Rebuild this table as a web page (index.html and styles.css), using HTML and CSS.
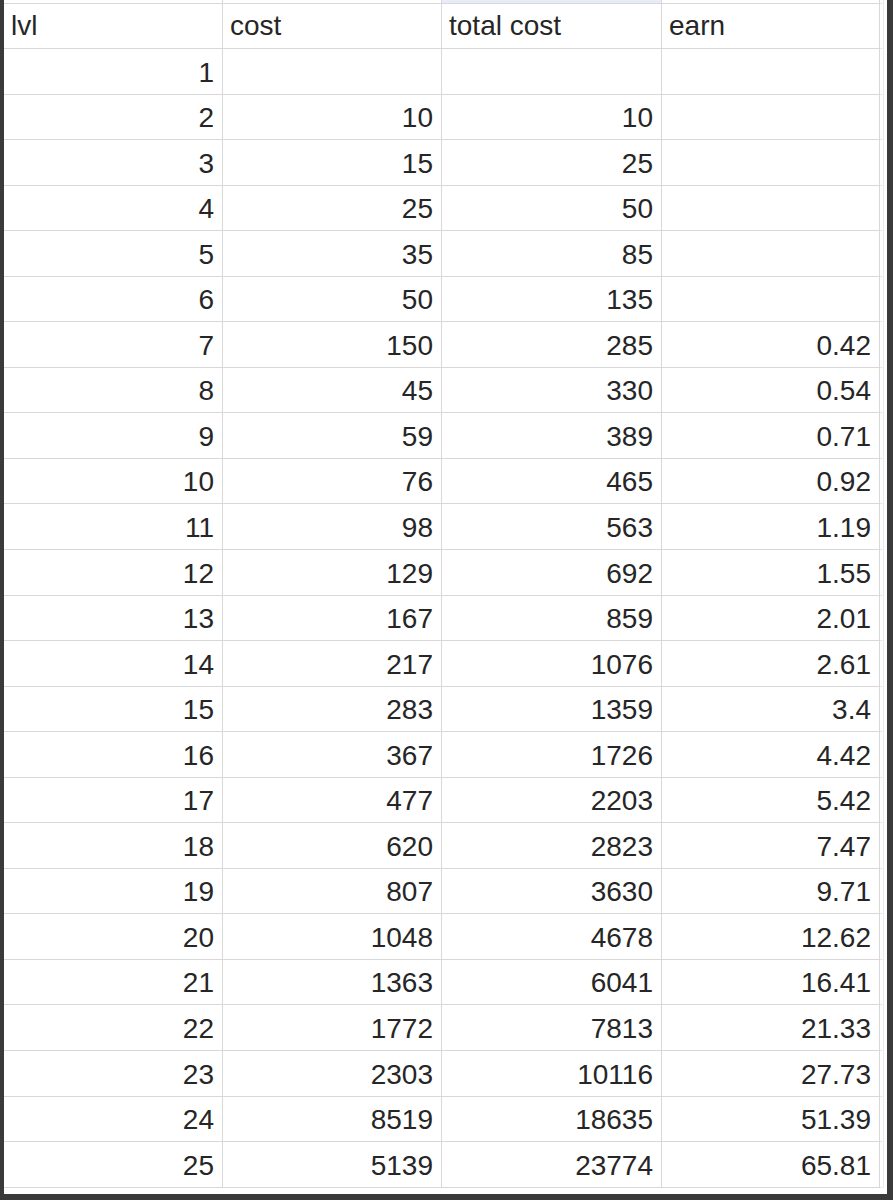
FILE: index.html
```html
<!DOCTYPE html>
<html>
<head>
<meta charset="utf-8">
<link rel="stylesheet" href="styles.css">
</head>
<body>
<div class="sheet">
  <div class="row top"><div class="c"></div><div class="c"></div><div class="c sel"></div><div class="c"></div><div class="c end"></div></div>
  <div class="row head"><div class="c">lvl</div><div class="c">cost</div><div class="c">total cost</div><div class="c">earn</div><div class="c end"></div></div>
  <div class="row"><div class="c n">1</div><div class="c n"></div><div class="c n"></div><div class="c n"></div><div class="c end"></div></div>
  <div class="row"><div class="c n">2</div><div class="c n">10</div><div class="c n">10</div><div class="c n"></div><div class="c end"></div></div>
  <div class="row"><div class="c n">3</div><div class="c n">15</div><div class="c n">25</div><div class="c n"></div><div class="c end"></div></div>
  <div class="row"><div class="c n">4</div><div class="c n">25</div><div class="c n">50</div><div class="c n"></div><div class="c end"></div></div>
  <div class="row"><div class="c n">5</div><div class="c n">35</div><div class="c n">85</div><div class="c n"></div><div class="c end"></div></div>
  <div class="row"><div class="c n">6</div><div class="c n">50</div><div class="c n">135</div><div class="c n"></div><div class="c end"></div></div>
  <div class="row"><div class="c n">7</div><div class="c n">150</div><div class="c n">285</div><div class="c n">0.42</div><div class="c end"></div></div>
  <div class="row"><div class="c n">8</div><div class="c n">45</div><div class="c n">330</div><div class="c n">0.54</div><div class="c end"></div></div>
  <div class="row"><div class="c n">9</div><div class="c n">59</div><div class="c n">389</div><div class="c n">0.71</div><div class="c end"></div></div>
  <div class="row"><div class="c n">10</div><div class="c n">76</div><div class="c n">465</div><div class="c n">0.92</div><div class="c end"></div></div>
  <div class="row"><div class="c n">11</div><div class="c n">98</div><div class="c n">563</div><div class="c n">1.19</div><div class="c end"></div></div>
  <div class="row"><div class="c n">12</div><div class="c n">129</div><div class="c n">692</div><div class="c n">1.55</div><div class="c end"></div></div>
  <div class="row"><div class="c n">13</div><div class="c n">167</div><div class="c n">859</div><div class="c n">2.01</div><div class="c end"></div></div>
  <div class="row"><div class="c n">14</div><div class="c n">217</div><div class="c n">1076</div><div class="c n">2.61</div><div class="c end"></div></div>
  <div class="row"><div class="c n">15</div><div class="c n">283</div><div class="c n">1359</div><div class="c n">3.4</div><div class="c end"></div></div>
  <div class="row"><div class="c n">16</div><div class="c n">367</div><div class="c n">1726</div><div class="c n">4.42</div><div class="c end"></div></div>
  <div class="row"><div class="c n">17</div><div class="c n">477</div><div class="c n">2203</div><div class="c n">5.42</div><div class="c end"></div></div>
  <div class="row"><div class="c n">18</div><div class="c n">620</div><div class="c n">2823</div><div class="c n">7.47</div><div class="c end"></div></div>
  <div class="row"><div class="c n">19</div><div class="c n">807</div><div class="c n">3630</div><div class="c n">9.71</div><div class="c end"></div></div>
  <div class="row"><div class="c n">20</div><div class="c n">1048</div><div class="c n">4678</div><div class="c n">12.62</div><div class="c end"></div></div>
  <div class="row"><div class="c n">21</div><div class="c n">1363</div><div class="c n">6041</div><div class="c n">16.41</div><div class="c end"></div></div>
  <div class="row"><div class="c n">22</div><div class="c n">1772</div><div class="c n">7813</div><div class="c n">21.33</div><div class="c end"></div></div>
  <div class="row"><div class="c n">23</div><div class="c n">2303</div><div class="c n">10116</div><div class="c n">27.73</div><div class="c end"></div></div>
  <div class="row"><div class="c n">24</div><div class="c n">8519</div><div class="c n">18635</div><div class="c n">51.39</div><div class="c end"></div></div>
  <div class="row"><div class="c n">25</div><div class="c n">5139</div><div class="c n">23774</div><div class="c n">65.81</div><div class="c end"></div></div>
</div>
</body>
</html>
```

FILE: styles.css
```css
html, body {
  margin: 0;
  padding: 0;
  background: #3a3a3a;
}

.sheet {
  margin-left: 4px;
  width: 883px;
  height: 1194px;
  background: #ffffff;
  font-family: "Liberation Sans", Arial, sans-serif;
  font-size: 28px;
  line-height: 28px;
  color: #262626;
}

.row {
  display: grid;
  grid-template-columns: 219px 219px 220px 218px 7px;
  height: 45.56px;
}

.row.top {
  height: 4px;
}

.row.head {
  height: 45px;
}

.c {
  box-sizing: border-box;
  border-right: 1px solid #d8d8d8;
  border-bottom: 1px solid #d8d8d8;
  padding: 0 8px 7px 7px;
  display: flex;
  align-items: flex-end;
  white-space: nowrap;
  overflow: hidden;
}

.head .c {
  padding-bottom: 8px;
}

.c.n {
  justify-content: flex-end;
}

.c.end {
  padding: 0;
  border-right: 1px solid #ececec;
  border-bottom: 1px solid #ececec;
  margin-right: 3px;
}

.top .c {
  padding: 0;
}

.top .c.sel {
  background: #e8ecf8;
}
```
